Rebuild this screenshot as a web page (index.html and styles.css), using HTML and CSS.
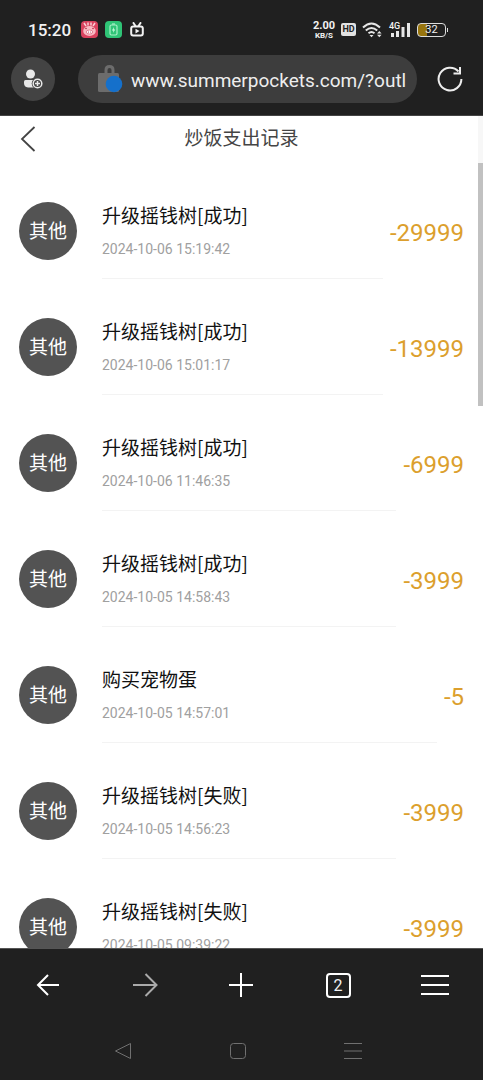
FILE: index.html
```html
<!DOCTYPE html>
<html lang="zh-CN">
<head>
<meta charset="utf-8">
<meta name="viewport" content="width=device-width, initial-scale=1">
<title>炒饭支出记录</title>
<link rel="stylesheet" href="styles.css">
</head>
<body>
<div class="phone">
  <header class="chrome">
    <div class="status">
      <span class="clock">15:20</span>
      <svg class="app" viewBox="0 0 17 17"><rect width="17" height="17" rx="4" fill="#d9435f"/><path d="M3 2l2 3M7 1.500v3M10 1.500v3M14 2l-2 3" stroke="#f8cfd5" stroke-width="1.500"/><ellipse cx="8.500" cy="10" rx="6.300" ry="5" fill="#f7bcc4"/><ellipse cx="8.500" cy="11" rx="3.300" ry="2" fill="#fff" stroke="#e0667b" stroke-width=".8"/><circle cx="5" cy="7.500" r=".8" fill="#b82643"/><circle cx="12" cy="7.500" r=".8" fill="#b82643"/><circle cx="7.500" cy="11" r=".6" fill="#b82643"/><circle cx="9.700" cy="11" r=".6" fill="#b82643"/></svg>
      <svg class="app" viewBox="0 0 17 17"><rect width="17" height="17" rx="4" fill="#2fc476"/><rect x="5" y="4" width="7" height="10" rx="1.500" fill="none" stroke="#a9f0c8" stroke-width="1.200"/><path d="M7 3h3" stroke="#a9f0c8" stroke-width="1.200"/><path d="M9 6L7 9.500h1.500L8 12l2.200-3.500H8.700z" fill="#d5ffe6"/></svg>
      <svg class="tv" viewBox="0 0 14 15" fill="none" stroke="#f2f2f2" stroke-width="2"><rect x="1.200" y="4.500" width="11.600" height="9" rx="2"/><path d="M3.500 1l2 3M10.500 1l-2 3" stroke-linecap="round"/><path d="M5.500 6.800v4.600l4-2.300z" fill="#f2f2f2" stroke="none"/></svg>
      <div class="signals">
        <span class="speed"><b>2.00</b><small>KB/S</small></span>
        <span class="hd">HD</span>
        <svg class="wifi" viewBox="0 0 21 16" fill="none" stroke="#e6e6e6" stroke-width="2"><path d="M1 5.500Q9.500-2.500 18 5.500M3.800 8.500q5.700-5 11.400 0M6.500 11.300q3-2.500 6 0"/><path d="M7.500 13h4l-2 2.300z" fill="#e6e6e6" stroke="none"/><path d="M15 11.500l2.300-2.600 2.300 2.600zM15 12.700l2.300 2.600 2.300-2.600z" fill="#e6e6e6" stroke="none"/></svg>
        <span class="cell"><i>4G</i><svg viewBox="0 0 22 16" fill="#e6e6e6"><path d="M2 11h3v4H2zM7 9h3v6H7zM12.500 5h3v10h-3zM18 1h3v14h-3z"/></svg></span>
        <span class="battery">32</span>
      </div>
    </div>
    <div class="toolbar">
      <button class="profile" aria-label="账户"><svg viewBox="0 0 20 20"><circle cx="7.500" cy="5" r="4.500" fill="#e8e8e8"/><path d="M1 12.500Q1 11 2.500 11H12v7.500H5Q1 18 1 14z" fill="#e8e8e8"/><circle cx="14.500" cy="14.500" r="5.800" fill="#434343"/><circle cx="14.500" cy="14.500" r="4.300" fill="none" stroke="#e8e8e8" stroke-width="1.500"/><path d="M14.500 12v5M12 14.500h5" stroke="#e8e8e8" stroke-width="1.500"/></svg></button>
      <label class="address">
        <svg viewBox="0 0 26 30"><path d="M9 10V6q0-3.500 3.500-3.500T16 6v4" fill="none" stroke="#6c6c6c" stroke-width="3"/><rect x="1" y="9" width="21" height="19" rx="1.500" fill="#6c6c6c"/><circle cx="17" cy="20" r="8.300" fill="#1570cb"/></svg>
        <input type="text" aria-label="网址" value="www.summerpockets.com/?outl">
      </label>
      <button class="reload" aria-label="刷新"><svg viewBox="0 0 26 26" fill="none" stroke="#ededed" stroke-width="2"><path d="M21.500 5.500A11.400 11.400 0 1 0 24.400 13"/><path d="M23 1v6.500h-6.500"/></svg></button>
    </div>
  </header>

  <main class="page">
    <div class="title-bar">
      <button class="back" aria-label="返回"><svg viewBox="0 0 16 28" fill="none" stroke="#444" stroke-width="1.800"><path d="M14.500 2L2 14l12.500 12"/></svg></button>
      <h1>炒饭支出记录</h1>
    </div>
    <ul class="records">
      <li><span class="tag">其他</span><div class="info"><h2>升级摇钱树[成功]</h2><time>2024-10-06 15:19:42</time></div><span class="amount">-29999</span></li>
      <li><span class="tag">其他</span><div class="info"><h2>升级摇钱树[成功]</h2><time>2024-10-06 15:01:17</time></div><span class="amount">-13999</span></li>
      <li><span class="tag">其他</span><div class="info"><h2>升级摇钱树[成功]</h2><time>2024-10-06 11:46:35</time></div><span class="amount">-6999</span></li>
      <li><span class="tag">其他</span><div class="info"><h2>升级摇钱树[成功]</h2><time>2024-10-05 14:58:43</time></div><span class="amount">-3999</span></li>
      <li><span class="tag">其他</span><div class="info"><h2>购买宠物蛋</h2><time>2024-10-05 14:57:01</time></div><span class="amount">-5</span></li>
      <li><span class="tag">其他</span><div class="info"><h2>升级摇钱树[失败]</h2><time>2024-10-05 14:56:23</time></div><span class="amount">-3999</span></li>
      <li><span class="tag">其他</span><div class="info"><h2>升级摇钱树[失败]</h2><time>2024-10-05 09:39:22</time></div><span class="amount">-3999</span></li>
    </ul>
    <div class="scrollbar"><div class="thumb"></div></div>
  </main>

  <footer class="bottom">
    <nav class="browser-nav">
      <button aria-label="后退"><svg viewBox="0 0 28 28"><path d="M25 14H4.500M14 4L4 14l10 10"/></svg></button>
      <button class="dim" aria-label="前进"><svg viewBox="0 0 28 28"><path d="M2 14h23M14.500 3l11 11-11 11"/></svg></button>
      <button aria-label="新建标签页"><svg viewBox="0 0 28 28"><path d="M14 2v24M2 14h24"/></svg></button>
      <button aria-label="标签页"><span class="tabs">2</span></button>
      <button aria-label="菜单"><svg viewBox="0 0 28 28"><path d="M0 5h28M0 14h28M0 23h28"/></svg></button>
    </nav>
    <nav class="system-nav">
      <button aria-label="系统返回"><svg viewBox="0 0 18 18"><path d="M16.500 1.500v15L1.500 9z"/></svg></button>
      <button aria-label="主屏幕"><svg viewBox="0 0 18 18"><rect x="1.500" y="1.500" width="15" height="15" rx="3"/></svg></button>
      <button aria-label="最近任务"><svg viewBox="0 0 18 18"><path d="M0 1.500h18M0 9h18M0 16.500h18"/></svg></button>
    </nav>
  </footer>
</div>
</body>
</html>
```

FILE: styles.css
```css
* { box-sizing: border-box; }
body { margin: 0; font-family: Roboto, "Noto Sans CJK SC", sans-serif; }
button { padding: 0; border: 0; background: none; font: inherit; color: inherit; display: grid; place-items: center; }
svg { display: block; }
h1, h2 { margin: 0; font-weight: 400; }

.phone { height: 100vh; display: flex; flex-direction: column; background: #fff; overflow: hidden; }

.chrome { background: #202020; color: #f2f2f2; padding-bottom: 12px; flex: none; border-bottom: 1px solid #444; }
.status { display: flex; align-items: center; height: 55px; padding: 4px 37px 0 28px; }
.clock { font-size: 17px; font-weight: 500; line-height: 24px; margin-right: 10px; }
.app { width: 17px; height: 17px; margin-right: 7px; }
.tv { width: 14px; height: 15px; margin-left: 1px; }
.signals { margin-left: auto; display: flex; align-items: center; gap: 6px; }
.speed { display: flex; flex-direction: column; align-items: center; }
.speed b { font-size: 11px; line-height: 11px; font-weight: 700; }
.speed small { font-size: 8px; line-height: 9px; font-weight: 700; }
.hd { background: #e2e2e2; color: #222; font-size: 9px; line-height: 13px; font-weight: 700; width: 15px; border-radius: 2px; text-align: center; }
.wifi { width: 21px; height: 16px; }
.cell { position: relative; }
.cell svg { width: 22px; height: 16px; }
.cell i { position: absolute; left: 0; top: 0; background: #202020; font-size: 9px; line-height: 8px; font-style: normal; font-weight: 500; }
.battery { width: 29px; height: 14px; border: 1px solid #ddd; border-radius: 4px; background: linear-gradient(90deg, #98750e 32%, transparent 32%); font-size: 11px; line-height: 12px; text-align: center; position: relative; }
.battery::after { content: ""; position: absolute; right: -3px; top: 4px; width: 1px; height: 4px; background: #ddd; }

.toolbar { display: flex; align-items: center; height: 48px; padding: 0 20px 0 11px; }
.profile { width: 44px; height: 44px; border-radius: 50%; background: #434343; margin-right: 23px; }
.profile svg { width: 20px; height: 20px; }
.address { flex: 1; min-width: 0; display: flex; align-items: center; height: 48px; border-radius: 24px; background: #3d3d3d; padding: 0 8px 0 19px; }
.address svg { width: 26px; height: 30px; flex: none; margin-right: 8px; }
.address input { flex: 1; min-width: 0; padding: 2px 0 0; border: 0; background: none; font: inherit; font-size: 19px; color: #eee; outline: 0; }
.reload { margin-left: 20px; }
.reload svg { width: 26px; height: 26px; }

.page { flex: 1; min-height: 0; overflow: hidden; position: relative; background: #fff; }
.title-bar { display: grid; grid-template-columns: 56px 1fr 56px; align-items: center; height: 46px; }
.back svg { width: 16px; height: 28px; }
.title-bar h1 { font-size: 19px; line-height: 28px; color: #444; text-align: center; }
.records { list-style: none; margin: 0; padding: 11px 0 0; }
.records li { display: flex; align-items: flex-start; height: 116px; padding: 29px 19px 10px; }
.tag { width: 58px; height: 58px; border-radius: 50%; background: #535353; color: #fff; font-size: 19px; line-height: 60px; text-align: center; flex: none; margin-right: 25px; }
.info { flex: 1; min-width: 0; height: 77px; border-bottom: 1px solid #f3f3f3; }
.info h2 { font-family: "Noto Sans CJK SC", sans-serif; font-size: 19px; line-height: 26px; color: #111; }
.info time { display: block; margin-top: 10px; font-size: 14px; line-height: 22px; color: #a0a0a0; }
.amount { margin-left: 7px; font-size: 24px; line-height: 62px; color: #dc9f2d; }
.scrollbar { position: absolute; top: 0; right: 0; bottom: 0; width: 5px; padding-top: 47px; background: linear-gradient(#f7f7f7 47px, transparent 47px); }
.thumb { height: 31%; background: #c1c1c1; }

.bottom { flex: none; background: #202020; color: #f2f2f2; }
.browser-nav { display: grid; grid-template-columns: repeat(5, 1fr); height: 73px; border-top: 1px solid #555; }
.browser-nav svg { width: 28px; height: 28px; fill: none; stroke: #fff; stroke-width: 2; }
.browser-nav .dim svg { stroke: #aaa; }
.tabs { width: 25px; height: 25px; border: 2px solid #fff; border-radius: 4px; font-size: 16px; line-height: 21px; text-align: center; }
.system-nav { display: flex; justify-content: center; gap: 97px; height: 59px; padding-right: 8px; }
.system-nav svg { width: 18px; height: 18px; fill: none; stroke: #707070; stroke-width: 1; }
```
